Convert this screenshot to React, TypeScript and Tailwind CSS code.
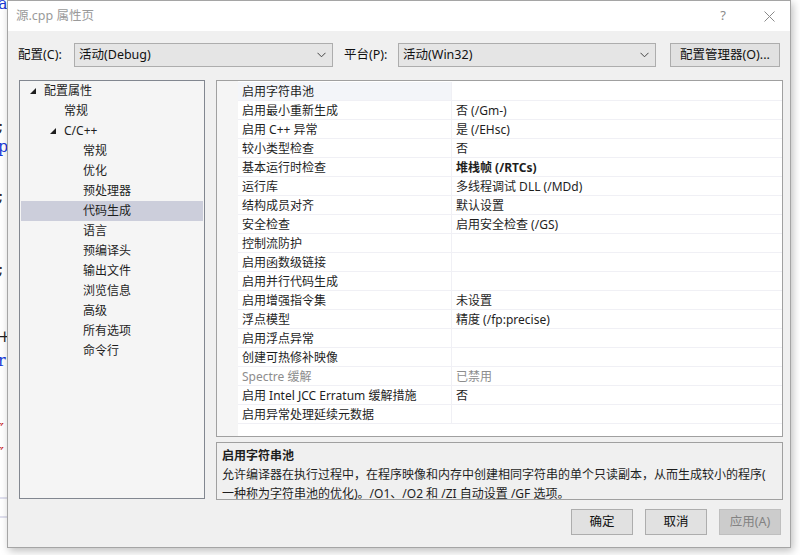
import React from "react";

const FONT = {
  fontFamily: '"Segoe UI", "Noto Sans", "Noto Sans CJK SC", sans-serif',
};

type TreeItem = { label: string; level: number; expanded?: boolean; selected?: boolean };

const tree: TreeItem[] = [
  { label: "配置属性", level: 0, expanded: true },
  { label: "常规", level: 1 },
  { label: "C/C++", level: 1, expanded: true },
  { label: "常规", level: 2 },
  { label: "优化", level: 2 },
  { label: "预处理器", level: 2 },
  { label: "代码生成", level: 2, selected: true },
  { label: "语言", level: 2 },
  { label: "预编译头", level: 2 },
  { label: "输出文件", level: 2 },
  { label: "浏览信息", level: 2 },
  { label: "高级", level: 2 },
  { label: "所有选项", level: 2 },
  { label: "命令行", level: 2 },
];

type Prop = { name: string; value?: string; bold?: boolean; disabled?: boolean };

const props: Prop[] = [
  { name: "启用字符串池" },
  { name: "启用最小重新生成", value: "否 (/Gm-)" },
  { name: "启用 C++ 异常", value: "是 (/EHsc)" },
  { name: "较小类型检查", value: "否" },
  { name: "基本运行时检查", value: "堆栈帧 (/RTCs)", bold: true },
  { name: "运行库", value: "多线程调试 DLL (/MDd)" },
  { name: "结构成员对齐", value: "默认设置" },
  { name: "安全检查", value: "启用安全检查 (/GS)" },
  { name: "控制流防护" },
  { name: "启用函数级链接" },
  { name: "启用并行代码生成" },
  { name: "启用增强指令集", value: "未设置" },
  { name: "浮点模型", value: "精度 (/fp:precise)" },
  { name: "启用浮点异常" },
  { name: "创建可热修补映像" },
  { name: "Spectre 缓解", value: "已禁用", disabled: true },
  { name: "启用 Intel JCC Erratum 缓解措施", value: "否" },
  { name: "启用异常处理延续元数据" },
];

function Chevron() {
  return (
    <svg width="9" height="6" viewBox="0 0 9 6" className="shrink-0">
      <path d="M0.5 0.8 L4.5 4.8 L8.5 0.8" fill="none" stroke="#444" strokeWidth="1" />
    </svg>
  );
}

function Triangle() {
  return (
    <svg width="6" height="6" viewBox="0 0 6 6" className="shrink-0">
      <path d="M6 0 L6 6 L0 6 Z" fill="#1e1e1e" />
    </svg>
  );
}

function Combo({ text, width }: { text: string; width: string }) {
  return (
    <div
      className={`${width} h-[24px] flex items-center justify-between pl-[4px] pr-[6px] bg-[#e5e5e5] border border-[#adadad] text-[12.5px] text-[#111]`}
    >
      <span>{text}</span>
      <Chevron />
    </div>
  );
}

function Btn({ label, disabled, w = "w-[62px]" }: { label: string; disabled?: boolean; w?: string }) {
  return (
    <div
      className={`${w} h-[26px] flex items-center justify-center border text-[12.5px] ${
        disabled
          ? "bg-[#cccccc] border-[#bfbfbf] text-[#838383]"
          : "bg-[#e1e1e1] border-[#adadad] text-[#111]"
      }`}
    >
      {label}
    </div>
  );
}

// the code editor peeking out behind the dialog
function EditorStrip() {
  const bits: { top: string; ch: string; cls: string }[] = [
    { top: "top-[-6px]", ch: "a", cls: "text-[#1a3ad6]" },
    { top: "top-[116px]", ch: ";", cls: "text-[#222]" },
    { top: "top-[137px]", ch: "p", cls: "text-[#1a3ad6]" },
    { top: "top-[186px]", ch: ";", cls: "text-[#222]" },
    { top: "top-[259px]", ch: ";", cls: "text-[#222]" },
    { top: "top-[327px]", ch: "+", cls: "text-[#222]" },
    { top: "top-[351px]", ch: "r", cls: "text-[#1a3ad6]" },
    { top: "top-[420px]", ch: "″", cls: "text-[#c81e1e]" },
    { top: "top-[444px]", ch: "″", cls: "text-[#c81e1e]" },
  ];
  return (
    <div className="absolute inset-0 bg-white overflow-hidden">
      {bits.map((b, i) => (
        <span
          key={i}
          className={`absolute left-[-2px] ${b.top} text-[16px] leading-[20px] ${b.cls}`}
          style={{ fontFamily: '"DejaVu Serif", serif' }}
        >
          {b.ch}
        </span>
      ))}
      <div className="absolute left-0 top-[497px] w-[8px] h-[2px] bg-[#e0e0ee]" />
      <div className="absolute left-0 top-[516px] w-[8px] h-[2px] bg-[#e0e0ee]" />
    </div>
  );
}

export default function App() {
  return (
    <div className="relative w-[800px] h-[555px] overflow-hidden" style={FONT}>
      <EditorStrip />

      {/* dialog window */}
      <div className="absolute left-[7px] top-0 w-[784px] h-[548px] flex flex-col bg-[#f0f0f0] border border-[#a5a5a5] shadow-[2px_3px_8px_rgba(0,0,0,0.25)]">
        {/* title bar */}
        <div className="h-[30px] bg-white flex items-center shrink-0">
          <span className="ml-[8px] text-[12.5px] text-[#9a9a9a]">源.cpp 属性页</span>
          <span className="ml-auto mr-[38px] text-[13px] text-[#8a8a8a]">?</span>
          <svg width="11" height="11" viewBox="0 0 11 11" className="mr-[15px]">
            <path d="M0.5 0.5 L10.5 10.5 M10.5 0.5 L0.5 10.5" stroke="#8a8a8a" strokeWidth="1" />
          </svg>
        </div>

        {/* config row */}
        <div className="flex items-center mt-[12px] ml-[10px] h-[24px] text-[12.5px] text-[#111]">
          <span className="w-[56px]">配置(C):</span>
          <Combo text="活动(Debug)" width="w-[259px]" />
          <span className="ml-[11px] w-[54px]">平台(P):</span>
          <Combo text="活动(Win32)" width="w-[258px]" />
          <div className="ml-[14px] w-[110px] h-[24px] flex items-center justify-center bg-[#e1e1e1] border border-[#adadad]">
            配置管理器(O)...
          </div>
        </div>

        {/* main */}
        <div className="flex mt-[13px] ml-[11px] gap-[11px]">
          {/* tree */}
          <div className="w-[186px] h-[419px] border border-[#828790] bg-[#f5f5f5] text-[12px] text-[#1e1e1e]">
            {tree.map((t, i) => (
              <div
                key={i}
                className={`h-[20px] flex items-center ${t.selected ? "bg-[#cccedb] mx-[1px]" : ""}`}
              >
                <div
                  className={`flex items-center ${
                    t.level === 0 ? "pl-[10px]" : t.level === 1 ? "pl-[30px]" : "pl-[49px]"
                  } ${t.selected ? "-ml-[1px]" : ""}`}
                >
                  <span className="w-[14px] flex items-center">{t.expanded ? <Triangle /> : null}</span>
                  <span>{t.label}</span>
                </div>
              </div>
            ))}
          </div>

          {/* right column */}
          <div className="flex flex-col w-[567px]">
            <div className="h-[357px] border border-[#a0a0a0] bg-white flex">
              <div className="w-[21px] bg-[#f5f5f5] shrink-0" />
              <div className="flex-1 flex flex-col pt-[1px]">
                {props.map((p, i) => (
                  <div key={i} className="h-[19px] flex border-b border-[#f0f0f5] text-[12px]">
                    <div
                      className={`w-[214px] pl-[4px] pt-[2px] flex items-center border-r border-[#f0f0f5] ${
                        i === 0 ? "bg-[#f3f5f9]" : ""
                      } ${p.disabled ? "text-[#8d8d8d]" : "text-[#1e1e1e]"}`}
                    >
                      {p.name}
                    </div>
                    <div
                      className={`flex-1 pl-[4px] pt-[2px] flex items-center ${
                        p.disabled ? "text-[#8d8d8d]" : "text-[#1e1e1e]"
                      } ${p.bold ? "font-bold" : ""}`}
                    >
                      {p.value ?? ""}
                    </div>
                  </div>
                ))}
              </div>
            </div>

            <div className="mt-[5px] h-[58px] border border-[#a0a0a0] bg-[#f0f0f0] px-[5px] pt-[3px] text-[12px] text-[#1e1e1e] leading-[19px]">
              <div className="font-bold">启用字符串池</div>
              <div>允许编译器在执行过程中，在程序映像和内存中创建相同字符串的单个只读副本，从而生成较小的程序(</div>
              <div>一种称为字符串池的优化)。/O1、/O2 和 /ZI 自动设置 /GF 选项。</div>
            </div>
          </div>
        </div>

        {/* buttons */}
        <div className="flex justify-end gap-[12px] mt-[9px] mr-[9px]">
          <Btn label="确定" />
          <Btn label="取消" />
          <Btn label="应用(A)" disabled />
        </div>
      </div>
    </div>
  );
}
